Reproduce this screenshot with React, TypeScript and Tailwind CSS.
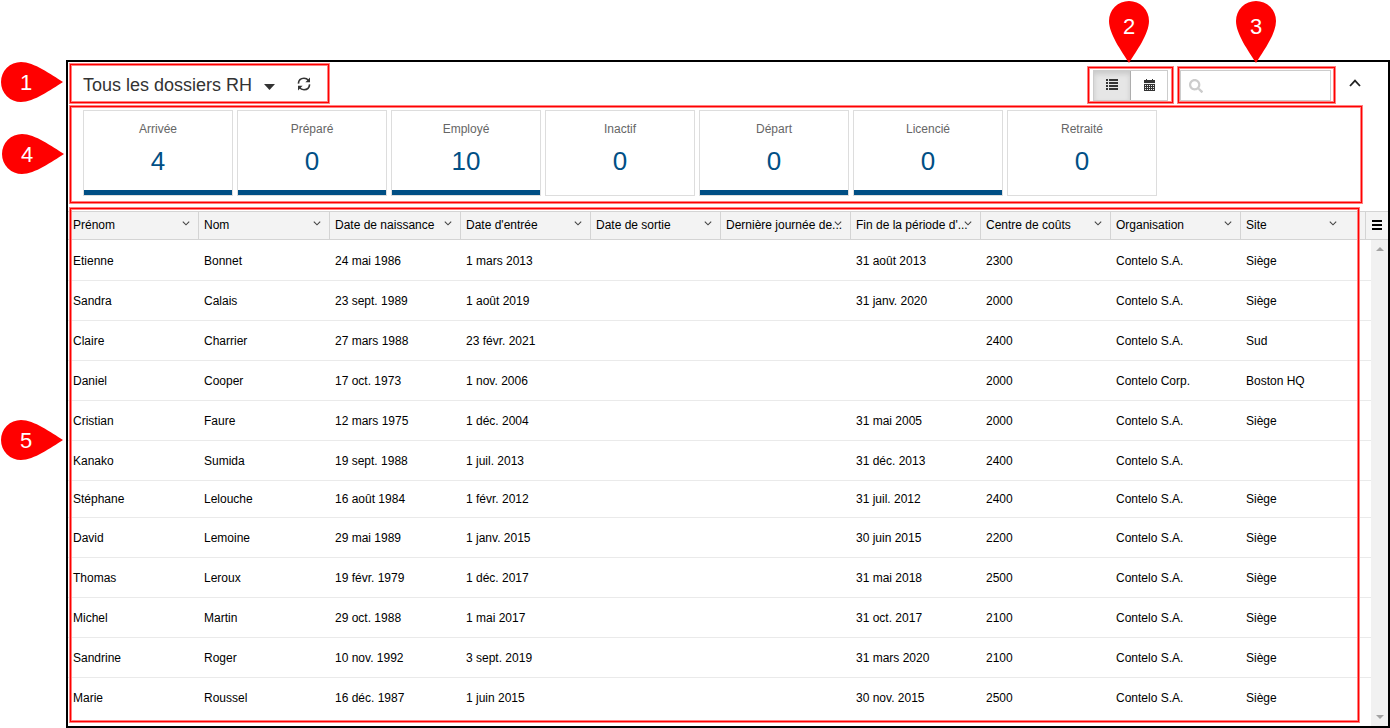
import { useState } from 'react'
import clsx from 'clsx'
import { FaSearch } from 'react-icons/fa'

const statuses = [
  { label: 'Arrivée', count: 4, active: true },
  { label: 'Préparé', count: 0, active: true },
  { label: 'Employé', count: 10, active: true },
  { label: 'Inactif', count: 0, active: false },
  { label: 'Départ', count: 0, active: true },
  { label: 'Licencié', count: 0, active: true },
  { label: 'Retraité', count: 0, active: false },
]

const columns = [
  { label: 'Prénom', width: 'w-[131px]' },
  { label: 'Nom', width: 'w-[131px]' },
  { label: 'Date de naissance', width: 'w-[131px]' },
  { label: "Date d'entrée", width: 'w-[130px]' },
  { label: 'Date de sortie', width: 'w-[130px]' },
  { label: 'Dernière journée de...', width: 'w-[130px]' },
  { label: "Fin de la période d'...", width: 'w-[130px]' },
  { label: 'Centre de coûts', width: 'w-[130px]' },
  { label: 'Organisation', width: 'w-[130px]' },
  { label: 'Site', width: '' },
]

const rows = [
  ['Etienne', 'Bonnet', '24 mai 1986', '1 mars 2013', '', '', '31 août 2013', '2300', 'Contelo S.A.', 'Siège'],
  ['Sandra', 'Calais', '23 sept. 1989', '1 août 2019', '', '', '31 janv. 2020', '2000', 'Contelo S.A.', 'Siège'],
  ['Claire', 'Charrier', '27 mars 1988', '23 févr. 2021', '', '', '', '2400', 'Contelo S.A.', 'Sud'],
  ['Daniel', 'Cooper', '17 oct. 1973', '1 nov. 2006', '', '', '', '2000', 'Contelo Corp.', 'Boston HQ'],
  ['Cristian', 'Faure', '12 mars 1975', '1 déc. 2004', '', '', '31 mai 2005', '2000', 'Contelo S.A.', 'Siège'],
  ['Kanako', 'Sumida', '19 sept. 1988', '1 juil. 2013', '', '', '31 déc. 2013', '2400', 'Contelo S.A.', ''],
  ['Stéphane', 'Lelouche', '16 août 1984', '1 févr. 2012', '', '', '31 juil. 2012', '2400', 'Contelo S.A.', 'Siège'],
  ['David', 'Lemoine', '29 mai 1989', '1 janv. 2015', '', '', '30 juin 2015', '2200', 'Contelo S.A.', 'Siège'],
  ['Thomas', 'Leroux', '19 févr. 1979', '1 déc. 2017', '', '', '31 mai 2018', '2500', 'Contelo S.A.', 'Siège'],
  ['Michel', 'Martin', '29 oct. 1988', '1 mai 2017', '', '', '31 oct. 2017', '2100', 'Contelo S.A.', 'Siège'],
  ['Sandrine', 'Roger', '10 nov. 1992', '3 sept. 2019', '', '', '31 mars 2020', '2100', 'Contelo S.A.', 'Siège'],
  ['Marie', 'Roussel', '16 déc. 1987', '1 juin 2015', '', '', '30 nov. 2015', '2500', 'Contelo S.A.', 'Siège'],
]

// Red frame around a zone of the screen
function Frame({ className }: { className: string }) {
  return (
    <span className={clsx('pointer-events-none absolute z-10 border border-[#ff8080]', className)}>
      <span className="block h-full border border-[#ff0000] shadow-[inset_0_0_0_1px_#ff8080]" />
    </span>
  )
}

// Numbered pin, its tip turned towards the zone it names
function Pin({ n, side, className }: { n: number; side?: boolean; className: string }) {
  return (
    <span className={clsx('absolute z-10', className)}>
      {side ? (
        <svg width="62" height="40" viewBox="0 0 62 40" className="block fill-[#ff0000]">
          <path d="M62 20 C50 12.5 33 0 20 0 A20 20 0 0 0 20 40 C33 40 50 27.5 62 20 Z" />
        </svg>
      ) : (
        <svg width="40" height="62" viewBox="0 0 40 62" className="block fill-[#ff0000]">
          <path d="M20 62 C12.5 50 0 33 0 20 A20 20 0 0 1 40 20 C40 33 27.5 50 20 62 Z" />
        </svg>
      )}
      <span
        className={clsx(
          'absolute top-0 left-0 flex items-center justify-center text-[22px] text-white',
          side ? 'h-10 w-[50px]' : 'h-[50px] w-10'
        )}
      >
        {n}
      </span>
    </span>
  )
}

function RefreshIcon() {
  return (
    <svg width="14" height="14" viewBox="0 0 14 14" fill="none" stroke="#333" strokeWidth="1.6">
      <path d="M1.4 6.6 C1.6 3.2 4 1.3 7 1.3 C8.8 1.3 10.4 2 11.4 3.4" />
      <path d="M12.6 7.4 C12.4 10.8 10 12.7 7 12.7 C5.2 12.7 3.6 12 2.6 10.6" />
      <path d="M13 0.6 V5.2 H8.4 Z" fill="#333" stroke="none" />
      <path d="M1 13.4 V8.8 H5.6 Z" fill="#333" stroke="none" />
    </svg>
  )
}

function ListIcon() {
  return (
    <svg width="12" height="11" viewBox="0 0 12 11" fill="#333" shapeRendering="crispEdges">
      <path d="M0 0h2v2H0z M3 0h9v2H3z M0 3h2v2H0z M3 3h9v2H3z M0 6h2v2H0z M3 6h9v2H3z M0 9h2v2H0z M3 9h9v2H3z" />
    </svg>
  )
}

function CalendarIcon() {
  return (
    <svg width="11" height="12" viewBox="0 0 11 12" shapeRendering="crispEdges">
      <path d="M2 0h1v1h5V0h1v1h2v11H0V1h2z" fill="#333" />
      <path
        d="M0 4h11v1H0z M1 6h1v1H1z M3 6h1v1H3z M5 6h1v1H5z M7 6h1v1H7z M9 6h1v1H9z M1 8h1v1H1z M3 8h1v1H3z M5 8h1v1H5z M7 8h1v1H7z M9 8h1v1H9z M1 10h1v1H1z M3 10h1v1H3z M5 10h1v1H5z M7 10h1v1H7z M9 10h1v1H9z"
        fill="#eee"
      />
    </svg>
  )
}

function Toolbar({ view, onView }: { view: string; onView: (v: string) => void }) {
  return (
    <header className="flex h-[43px] items-center justify-between pr-[27px]">
      <div className="relative flex h-full items-center pr-5 pl-[15px]">
        <Frame className="inset-px" />
        <Pin n={1} side className="top-0 -left-[67px]" />
        <button type="button" className="flex items-center gap-3 pt-0.5 text-lg text-[#333]">
          Tous les dossiers RH
          <svg width="11" height="6" viewBox="0 0 11 6" fill="#333" className="mt-1">
            <path d="M0 0 H11 L5.5 6 Z" />
          </svg>
        </button>
        <button type="button" aria-label="Actualiser" className="ml-[22px]">
          <RefreshIcon />
        </button>
      </div>

      <div className="flex items-center pt-1">
        <div className="relative">
          <Frame className="-inset-x-1.5 -top-1 -bottom-[3px]" />
          <Pin n={2} className="-top-[69px] left-4" />
          <div className="flex h-[31px] border border-[#ccc]">
            <button
              type="button"
              aria-label="Liste"
              aria-pressed={view === 'list'}
              onClick={() => onView('list')}
              className={clsx(
                'flex w-[37px] items-center justify-center border-r border-[#adadad] pb-0.5',
                view === 'list' && 'bg-[#e6e6e6] shadow-[inset_0_3px_5px_rgba(0,0,0,0.125)]'
              )}
            >
              <ListIcon />
            </button>
            <button
              type="button"
              aria-label="Calendrier"
              aria-pressed={view === 'calendar'}
              onClick={() => onView('calendar')}
              className={clsx(
                'flex w-9 items-center justify-center pb-0.5',
                view === 'calendar' && 'bg-[#e6e6e6] shadow-[inset_0_3px_5px_rgba(0,0,0,0.125)]'
              )}
            >
              <CalendarIcon />
            </button>
          </div>
        </div>

        <div className="relative ml-3">
          <Frame className="-top-1 -right-[5px] -bottom-[3px] -left-[3px]" />
          <Pin n={3} className="-top-[69px] left-14" />
          <label className="flex h-[31px] w-[151px] items-center border border-[#ccc] pl-2">
            <FaSearch size={14} color="#ccc" className="shrink-0" />
            <input type="text" aria-label="Rechercher" className="ml-2 w-full min-w-0 text-xs outline-none" />
          </label>
        </div>

        <button type="button" aria-label="Réduire" className="mb-1 ml-[18px] pb-0.5">
          <svg width="12" height="8" viewBox="0 0 12 8" fill="none" stroke="#222" strokeWidth="1.8">
            <path d="M1 7 L6 1.6 L11 7" />
          </svg>
        </button>
      </div>
    </header>
  )
}

function Scrollbar() {
  return (
    <div className="absolute top-[29px] right-0 bottom-0 flex w-[17px] flex-col items-center justify-between bg-[#f1f1f1] py-[7px]">
      <svg width="8" height="4" viewBox="0 0 8 4" fill="#a3a3a3">
        <path d="M0 4 L4 0 L8 4 Z" />
      </svg>
      <svg width="8" height="4" viewBox="0 0 8 4" fill="#a3a3a3">
        <path d="M0 0 L4 4 L8 0 Z" />
      </svg>
    </div>
  )
}

function rowHeight(i: number) {
  if (i === 0) return 'h-[41px]'
  if (i === 6) return 'h-[37px]'
  return 'h-10'
}

export default function App() {
  const [view, setView] = useState('list')

  return (
    <div className="bg-white pt-[60px] pl-[66px] font-['Liberation_Sans',Arial,sans-serif] text-black">
      <main className="border-2 border-black">
        <Toolbar view={view} onView={setView} />

        <section className="relative flex h-[106px] gap-1 pt-[5px] pl-[15px]">
          <Frame className="top-0 right-[25px] left-px h-[99px]" />
          <Pin n={4} side className="top-[29px] -left-[66px]" />
          {statuses.map((s) => (
            <button
              key={s.label}
              type="button"
              className="flex h-[86px] w-[150px] flex-col items-center border border-[#ddd] pt-[9px]"
            >
              <span className="text-xs leading-[18px] text-[#666]">{s.label}</span>
              <span className="mt-2 text-[26px] leading-[30px] text-[#004f85]">{s.count}</span>
              {s.active && <span className="mt-auto h-[5px] w-full bg-[#004f85]" />}
            </button>
          ))}
        </section>

        <section className="relative pb-2">
          <Frame className="-top-1 right-7 bottom-[3px] left-px" />
          <Pin n={5} side className="top-[209px] -left-[67px]" />
          <table className="w-full table-fixed border-separate border-spacing-0 text-left text-xs">
            <thead>
              <tr className="h-[29px] bg-[#f3f3f3]">
                {columns.map((c) => (
                  <th
                    key={c.label}
                    className={clsx('border-y border-r border-[#d4d4d4] p-0 pb-0.5 pl-[5px] font-normal', c.width)}
                  >
                    <div className="relative whitespace-nowrap">
                      {c.label}
                      <svg
                        width="8"
                        height="5"
                        viewBox="0 0 8 5"
                        fill="none"
                        stroke="#444"
                        strokeWidth="1.1"
                        className={clsx('absolute top-1', c.label === 'Site' ? 'right-7' : 'right-2')}
                      >
                        <path d="M0.8 0.6 L4 3.8 L7.2 0.6" />
                      </svg>
                    </div>
                  </th>
                ))}
                <th className="w-[22px] border-y border-[#d4d4d4] p-0 pb-0.5">
                  <button type="button" aria-label="Colonnes" className="flex w-full justify-center pr-px">
                    <svg width="10" height="10" viewBox="0 0 10 10" shapeRendering="crispEdges">
                      <path d="M0 0h10v2H0z M0 4h10v2H0z M0 8h10v2H0z" />
                    </svg>
                  </button>
                </th>
              </tr>
            </thead>
            <tbody>
              {rows.map((row, i) => (
                <tr key={row[1]} className={rowHeight(i)}>
                  {row.map((cell, j) => (
                    <td
                      key={j}
                      colSpan={j === row.length - 1 ? 2 : 1}
                      className={clsx(
                        'p-0 pl-[5px]',
                        i === 0 && 'pt-0.5',
                        i < rows.length - 1 && 'border-b border-[#eaeaea]'
                      )}
                    >
                      {cell}
                    </td>
                  ))}
                </tr>
              ))}
            </tbody>
          </table>
          <Scrollbar />
        </section>
      </main>
    </div>
  )
}
